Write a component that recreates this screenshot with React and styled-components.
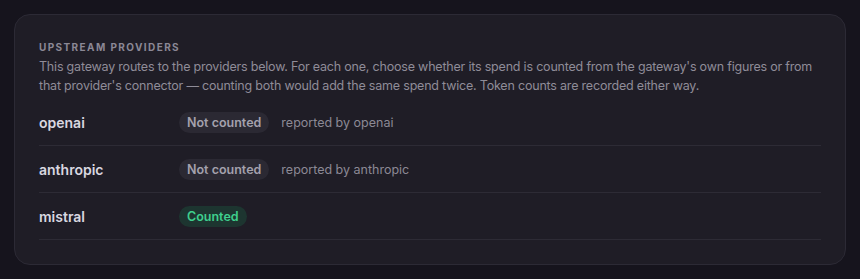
import React from 'react'
import styled, { createGlobalStyle } from 'styled-components'

const providers = [
  { name: 'openai', counted: false, note: 'reported by openai' },
  { name: 'anthropic', counted: false, note: 'reported by anthropic' },
  { name: 'mistral', counted: true },
]

const App = () => {
  return (
    <Page>
      <GlobalStyle />
      <Card>
        <Heading>Upstream providers</Heading>
        <Description>
          This gateway routes to the providers below. For each one, choose whether its spend is counted from the gateway's own figures or from
          that provider's connector — counting both would add the same spend twice. Token counts are recorded either way.
        </Description>
        <List>
          {providers.map((p) => (
            <Row key={p.name}>
              <Name>{p.name}</Name>
              <Badge $counted={p.counted}>{p.counted ? 'Counted' : 'Not counted'}</Badge>
              {p.note && <Note>{p.note}</Note>}
            </Row>
          ))}
        </List>
      </Card>
    </Page>
  )
}

export default App

const GlobalStyle = createGlobalStyle`
  body {
    margin: 0;
    background: #16141d;
    font-family: Inter, "Noto Sans", sans-serif;
  }
`

const Page = styled.div`
  padding: 14px;
  min-height: 279px;
  box-sizing: border-box;
`

const Card = styled.section`
  background: #1f1d26;
  border: 1px solid #2c2a35;
  border-radius: 16px;
  padding: 25px 24px 24px;
`

const Heading = styled.h2`
  margin: 0;
  font-size: 10px;
  font-weight: 700;
  letter-spacing: 1.4px;
  text-transform: uppercase;
  color: #8b8895;
  line-height: 14px;
`

const Description = styled.p`
  margin: 3px 0 4px;
  font-size: 12.5px;
  letter-spacing: -0.2px;
  line-height: 19px;
  color: #8f8c98;
`

const List = styled.div`
  display: flex;
  flex-direction: column;
`

const Row = styled.div`
  display: flex;
  align-items: center;
  height: 46px;
  border-bottom: 1px solid #2d2b35;
`

const Name = styled.span`
  width: 140px;
  font-size: 14px;
  font-weight: 600;
  color: #d9d7e0;
`

const Badge = styled.span`
  display: inline-flex;
  align-items: center;
  height: 21px;
  padding: 0 8px;
  border-radius: 11px;
  font-size: 12.5px;
  font-weight: 600;
  background: ${(p) => (p.$counted ? '#1d3530' : '#2b2933')};
  color: ${(p) => (p.$counted ? '#3fcf8e' : '#a4a1ad')};
`

const Note = styled.span`
  margin-left: 12px;
  font-size: 12.5px;
  color: #8c8995;
`
